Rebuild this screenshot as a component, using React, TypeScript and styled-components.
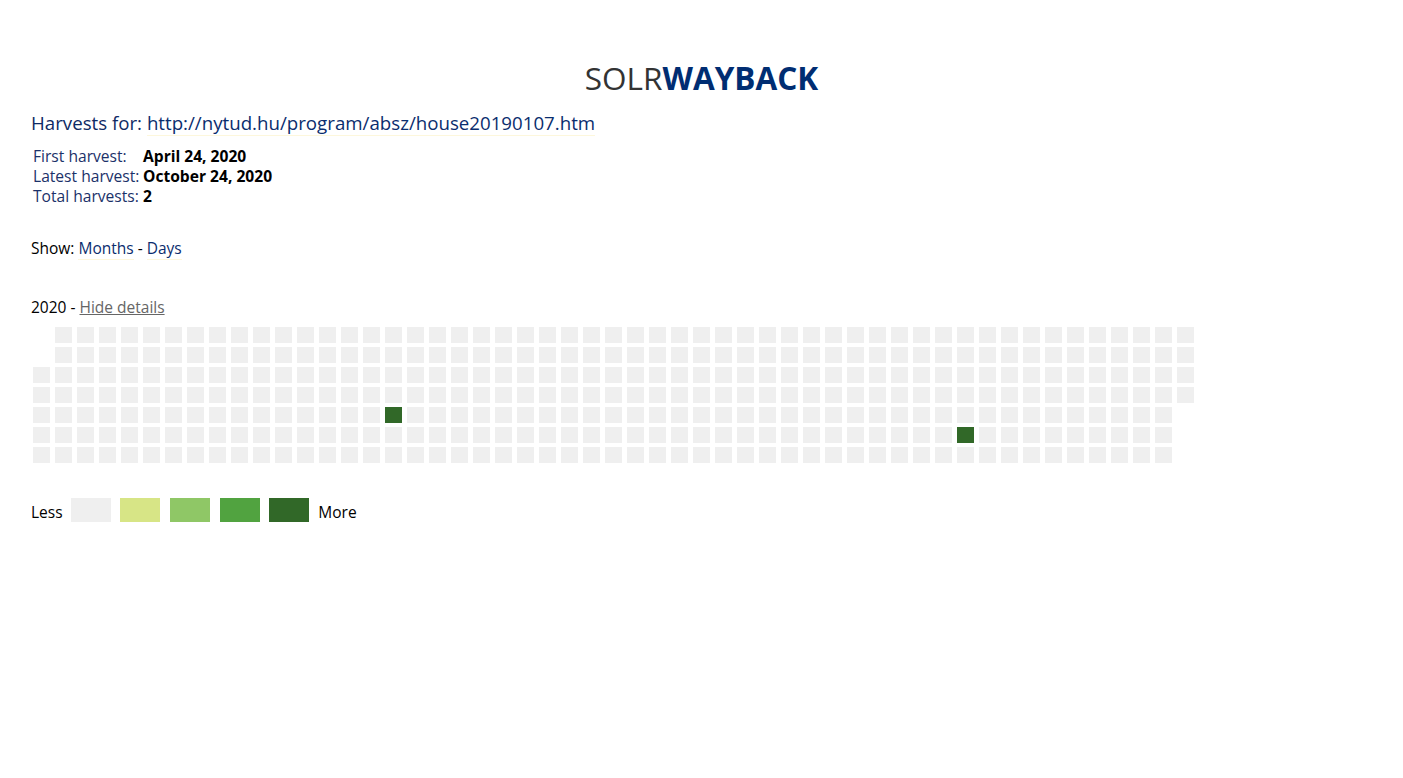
import React from "react";
import styled, { createGlobalStyle } from "styled-components";

const Global = createGlobalStyle`
  html, body { margin: 0; padding: 0; background: #fff; }
  body { font-family: "Open Sans", "Noto Sans", sans-serif; color: #000; }
`;

const Page = styled.div`
  padding: 57px 31px 0 31px;
`;

const Title = styled.h1`
  margin: 0;
  text-align: center;
  font-size: 31.5px;
  line-height: 42px;
  font-weight: 400;
`;

const Solr = styled.span`
  color: #333;
  font-weight: 400;
`;

const Wayback = styled.span`
  color: #002d72;
  font-weight: 700;
`;

const Heading = styled.h2`
  margin: 10px 0 0 0;
  font-size: 18.7px;
  line-height: 28px;
  font-weight: 400;
  color: #0e2a64;
`;

const Details = styled.div`
  display: grid;
  grid-template-columns: 110px auto;
  margin: 9px 0 0 2px;
  font-size: 15.6px;
  line-height: 20px;
`;

const Label = styled.div`
  color: #1b3169;
`;

const Value = styled.div`
  font-weight: 700;
  color: #000;
`;

const Line = styled.div<{ $top: number }>`
  margin-top: ${(p) => p.$top}px;
  font-size: 15.5px;
  line-height: 22px;
`;

const Link = styled.a`
  color: #0a2d6e;
  text-decoration: none;
  border-bottom: 1px solid #fdf7dc;
`;

const GrayLink = styled.a`
  color: #666;
  text-decoration: underline;
`;

const Grid = styled.div`
  display: grid;
  grid-template-rows: repeat(7, 16px);
  grid-auto-flow: column;
  grid-auto-columns: 17px;
  column-gap: 5px;
  row-gap: 4px;
  margin-top: 9px;
  margin-left: 2px;
`;

const Cell = styled.div<{ $level: number; $blank?: boolean }>`
  background: ${(p) => (p.$blank ? "transparent" : levels[p.$level])};
`;

const Legend = styled.div`
  display: flex;
  align-items: center;
  margin-top: 34px;
  font-size: 15.5px;
`;

const LegendText = styled.span`
  margin: 4px 0 0 0;
`;

const Swatch = styled.div<{ $level: number }>`
  width: 40px;
  height: 24px;
  margin-left: 9.7px;
  background: ${(p) => levels[p.$level]};
  &:first-of-type { margin-left: 8px; }
`;

const MoreText = styled.span`
  margin: 4px 0 0 9px;
`;

const levels = ["#efefef", "#d7e586", "#8fc766", "#51a340", "#316828"];

const harvests = new Set(["2020-3-24", "2020-9-24"]);

function buildCells() {
  const cells: { key: string; level: number; blank: boolean }[] = [];
  const start = new Date(2020, 0, 1);
  const offset = (start.getDay() + 6) % 7; // Monday first
  for (let i = 0; i < offset; i++) cells.push({ key: "b" + i, level: 0, blank: true });
  const d = new Date(start);
  while (d.getFullYear() === 2020) {
    const k = `${d.getFullYear()}-${d.getMonth()}-${d.getDate()}`;
    cells.push({ key: k, level: harvests.has(k) ? 4 : 0, blank: false });
    d.setDate(d.getDate() + 1);
  }
  return cells;
}

export default function App() {
  const cells = buildCells();
  return (
    <>
      <Global />
      <Page>
        <Title>
          <Solr>SOLR</Solr>
          <Wayback>WAYBACK</Wayback>
        </Title>
        <Heading>
          Harvests for: <Link href="#">http://nytud.hu/program/absz/house20190107.htm</Link>
        </Heading>
        <Details>
          <Label>First harvest:</Label>
          <Value>April 24, 2020</Value>
          <Label>Latest harvest:</Label>
          <Value>October 24, 2020</Value>
          <Label>Total harvests:</Label>
          <Value>2</Value>
        </Details>
        <Line $top={31}>
          Show: <Link href="#">Months</Link> - <Link href="#">Days</Link>
        </Line>
        <Line $top={37}>
          2020 - <GrayLink href="#">Hide details</GrayLink>
        </Line>
        <Grid>
          {cells.map((c) => (
            <Cell key={c.key} $level={c.level} $blank={c.blank} />
          ))}
        </Grid>
        <Legend>
          <LegendText>Less</LegendText>
          {[0, 1, 2, 3, 4].map((l) => (
            <Swatch key={l} $level={l} />
          ))}
          <MoreText>More</MoreText>
        </Legend>
      </Page>
    </>
  );
}
